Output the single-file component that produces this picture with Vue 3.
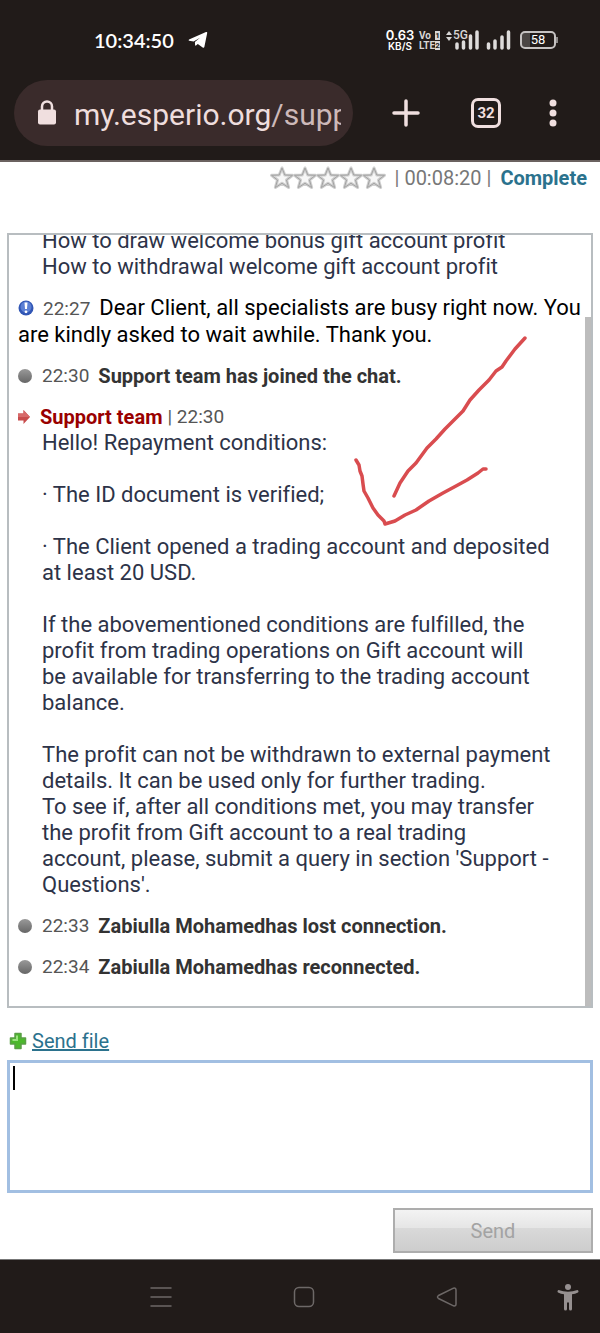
<script setup>
import { ref } from 'vue'

const entries = [
  { kind: 'reply', text: 'How to draw welcome bonus gift account profit\nHow to withdrawal welcome gift account profit' },
  { kind: 'notice', time: '22:27', text: 'Dear Client, all specialists are busy right now. You are kindly asked to wait awhile. Thank you.' },
  { kind: 'event', time: '22:30', text: 'Support team has joined the chat.' },
  {
    kind: 'reply',
    author: 'Support team',
    time: '22:30',
    text: `Hello! Repayment conditions:

· The ID document is verified;

· The Client opened a trading account and deposited
at least 20 USD.

If the abovementioned conditions are fulfilled, the
profit from trading operations on Gift account will
be available for transferring to the trading account
balance.

The profit can not be withdrawn to external payment
details. It can be used only for further trading.
To see if, after all conditions met, you may transfer
the profit from Gift account to a real trading
account, please, submit a query in section 'Support -
Questions'.`,
  },
  { kind: 'event', time: '22:33', text: 'Zabiulla Mohamedhas lost connection.' },
  { kind: 'event', time: '22:34', text: 'Zabiulla Mohamedhas reconnected.' },
]

const draft = ref('')
</script>

<template>
  <div class="screen">
    <div class="status">
      <span class="clock">10:34:50</span>
      <svg class="plane" width="20" height="18" viewBox="0 0 20 18"><path d="M1 8.600 18 1.100Q19.400.7 19.200 2L16.400 15.800Q16 17.400 14.700 16.600L9.800 13 8 14.600Q7.200 15 7.100 14L6.900 11 12 6.800 5.600 10.600 1.100 9.800Q.1 9.300 1 8.600Z" fill="#fff" /></svg>
      <div class="indicators">
        <div class="rate"><span class="rate-value">0.63</span><span>KB/S</span></div>
        <div class="volte">
          <span>Vo<i>1</i></span><span>LTE<i>2</i></span>
        </div>
        <div class="network">
          <svg width="34" height="20" viewBox="0 0 34 20">
            <path d="M3 1 6 5H0ZM0 7H6L3 11Z" fill="#d8d6d5" />
            <path d="M11 14V18M17.500 12V18M24.500 6V18M31 2V18" stroke="#dedcdb" stroke-width="3.500" stroke-linecap="round" />
          </svg>
          <span class="gen">5G</span>
        </div>
        <svg class="bars" width="26" height="20" viewBox="0 0 26 20"><path d="M2.500 14V18M9 11V18M16 7V18M22.500 2V18" stroke="#dedcdb" stroke-width="3.500" stroke-linecap="round" /></svg>
        <div class="battery"><span>58</span></div>
      </div>
    </div>

    <div class="toolbar">
      <div class="address">
        <svg width="20" height="26" viewBox="0 0 20 26"><path d="M5 11V6.500a5 5 0 0 1 10 0V11" fill="none" stroke="#f0dfdf" stroke-width="2.500" /><rect x="1" y="9.500" width="18" height="15" rx="2" fill="#f0dfdf" /></svg>
        <span class="url">my.esperio.org<span class="path">/support</span></span>
      </div>
      <button class="icon-button" aria-label="New tab"><svg width="28" height="28" viewBox="0 0 28 28"><path d="M14 2V26M2 14H26" stroke="#f0dfdf" stroke-width="3.500" stroke-linecap="round" /></svg></button>
      <button class="tabs" aria-label="Open tabs">32</button>
      <button class="icon-button" aria-label="Menu"><svg width="8" height="28" viewBox="0 0 8 28"><g fill="#f0dfdf"><circle cx="4" cy="4" r="3.500" /><circle cx="4" cy="14" r="3.500" /><circle cx="4" cy="24" r="3.500" /></g></svg></button>
    </div>

    <main class="page">
      <div class="session">
        <div class="stars">
          <svg v-for="n in 5" :key="n" width="24" height="24" viewBox="0 0 24 24"><path d="M12 2 14.800 9 22.500 9.300 16.500 14 18.600 21.500 12 17.300 5.400 21.500 7.500 14 1.500 9.300 9.200 9Z" fill="#f7f7f7" stroke="#cfcfcf" stroke-width="3" stroke-linejoin="round" /><path d="M12 2 14.800 9 22.500 9.300 16.500 14 18.600 21.500 12 17.300 5.400 21.500 7.500 14 1.500 9.300 9.200 9Z" fill="none" stroke="#a3a3a3" stroke-width="1" stroke-linejoin="round" /></svg>
        </div>
        <span>| 00:08:20 |</span>
        <a href="#" class="complete">Complete</a>
      </div>

      <section class="chat">
        <div v-for="(entry, i) in entries" :key="i" class="entry" :class="entry.kind">
          <template v-if="entry.kind === 'reply'">
            <div v-if="entry.author" class="author">
              <svg width="12" height="14" viewBox="0 0 12 14"><path d="M0 3.500H5.500V0L12 7 5.500 14V10.500H0Z" fill="#c84c4c" /><path d="M0 3.500H5.500V0L12 7H0Z" fill="#d76a6a" /></svg>
              <b>{{ entry.author }}</b><span class="time">| {{ entry.time }}</span>
            </div>
            <p class="message">{{ entry.text }}</p>
          </template>
          <template v-else-if="entry.kind === 'notice'">
            <svg class="mark" width="16" height="16" viewBox="0 0 16 16"><circle cx="8" cy="8" r="7.500" fill="#3156b5" /><circle cx="8" cy="7" r="5.500" fill="#5b7fd4" /><path d="M6.500 2.500H9.500L9 9H7Z" fill="#fff" /><circle cx="8" cy="11.800" r="1.400" fill="#fff" /></svg><span class="time">{{ entry.time }}</span>{{ entry.text }}
          </template>
          <template v-else>
            <span class="dot"></span><span class="time">{{ entry.time }}</span><b>{{ entry.text }}</b>
          </template>
        </div>
        <div class="scroll-thumb"></div>
        <svg class="scribble" width="180" height="196" viewBox="0 0 180 196" fill="none" stroke="#d94c4f" stroke-width="3.500" stroke-linecap="round" stroke-linejoin="round">
          <path d="M173 5 163 16 154 28 150 34 144 38 137 47 127 57 118 67 111 78 102 87 93 96 84 106 75 115 64 130 56 138 48 150 42 163" />
          <path d="M4 127 7 132 8 138 10 143 11 151 12 158 16 165 21 175 26 182 32 188 33 191 43 188 53 182 64 177 77 168 91 160 104 153 115 147 126 140 131 136 134 136" />
        </svg>
      </section>

      <a href="#" class="send-file">
        <svg width="18" height="18" viewBox="0 0 18 18"><path d="M6 1.500H12V6H16.500V12H12V16.500H6V12H1.500V6H6Z" fill="#4cb82c" stroke="#5a9f45" stroke-width="1.500" stroke-linejoin="round" /><path d="M8 3.500V8H3.500" fill="none" stroke="#9be37f" stroke-width="2" /></svg>
        <span>Send file</span>
      </a>
      <div class="field">
        <textarea v-model="draft" class="draft" aria-label="Message"></textarea>
        <span v-if="!draft" class="caret"></span>
      </div>
      <button class="send" disabled>Send</button>
    </main>

    <nav class="system">
      <button aria-label="Recent apps"><svg width="22" height="22" viewBox="0 0 22 22"><path d="M1 2H21M1 11H21M1 20H21" /></svg></button>
      <button aria-label="Home"><svg width="22" height="22" viewBox="0 0 22 22"><rect x="1.500" y="1.500" width="19" height="19" rx="4.500" /></svg></button>
      <button aria-label="Back"><svg width="22" height="22" viewBox="0 0 22 22"><path d="M17.500 2.200 2.500 9.500Q.500 11 2.500 12.500L17.500 19.800Q20 20.500 20 18V4Q20 1.500 17.500 2.200Z" /></svg></button>
      <button class="access" aria-label="Accessibility"><svg width="22" height="28" viewBox="0 0 22 28"><circle cx="11" cy="4" r="3" /><path d="M1.500 7Q11 10.500 20.500 7A1.500 1.500 0 0 1 21 9.500Q18 11 15 11.200V26A1 1 0 0 1 12 26V19.500H10V26A1 1 0 0 1 7 26V11.200Q4 11 1 9.500A1.500 1.500 0 0 1 1.500 7Z" /></svg></button>
    </nav>
  </div>
</template>

<style>
body { margin: 0; background: #fff; }
</style>

<style scoped>
* { box-sizing: border-box; }
button { padding: 0; border: 0; background: none; font-family: inherit; }
svg { display: block; flex: none; }
.screen { min-height: 100vh; display: flex; flex-direction: column; font-family: Roboto, "Liberation Sans", sans-serif; font-variant-ligatures: none; background: #fff; }

.status { height: 80px; padding: 0 44px 0 94px; display: flex; align-items: center; background: #211b19; color: #fff; }
.clock { font: 600 20px/24px Lato, Roboto, sans-serif; }
.plane { margin-left: 14px; }
.indicators { margin-left: auto; display: flex; align-items: center; }
.rate { width: 28px; display: flex; flex-direction: column; align-items: center; font: 600 10px/10px Inter, Roboto, sans-serif; }
.rate-value { font-size: 13px; line-height: 12px; }
.volte { width: 21px; margin-left: 5px; display: flex; flex-direction: column; gap: 1px; font: 700 10px/9px "DejaVu Sans Condensed", Roboto, sans-serif; font-family: Roboto, sans-serif; color: #d8d6d5; }
.volte span { display: flex; justify-content: space-between; }
.volte i { flex: none; width: 5px; background: #d8d6d5; color: #211b19; font-size: 8px; font-style: normal; text-align: center; }
.network { position: relative; margin-left: 6px; }
.gen { position: absolute; left: 7px; top: 0; background: #211b19; font: 500 12px/10px Roboto, sans-serif; color: #d8d6d5; }
.bars { margin-left: 6px; }
.battery { position: relative; width: 36px; height: 18px; margin-left: 8px; border: 2px solid #c5c2c1; border-radius: 5px; background: linear-gradient(90deg, #4b4644 26%, #211b19 26%); text-align: center; font-size: 13px; line-height: 14px; }
.battery::after { content: ""; position: absolute; right: -4px; top: 4px; width: 2px; height: 6px; background: #8d8988; }

.toolbar { height: 82px; padding: 0 43px 14px 14px; display: flex; align-items: center; background: #211b19; border-bottom: 2px solid #6b6260; }
.address { flex: 1; height: 66px; padding: 0 12px 0 23px; display: flex; align-items: center; gap: 17px; overflow: hidden; border-radius: 33px; background: #3a2b2b; }
.url { flex: 1; padding-top: 4px; overflow: hidden; white-space: nowrap; font-size: 30px; line-height: 40px; color: #eedddd; }
.path { color: #cdb9b9; }
.icon-button { display: flex; }
.address + .icon-button { margin-left: 39px; }
.tabs { width: 30px; height: 30px; margin: 0 48px 0 51px; border: 3px solid #f0dfdf; border-radius: 7px; color: #f0dfdf; font-size: 15px; font-weight: 700; line-height: 24px; }
.tabs + .icon-button { margin: 0; }

.page { flex: 1; padding: 3px 7px 6px; display: flex; flex-direction: column; }
.session { height: 68px; padding-right: 6px; display: flex; justify-content: flex-end; align-items: flex-start; font-size: 20px; line-height: 26px; color: #777; white-space: nowrap; }
.stars { display: flex; height: 26px; margin-right: 10px; align-items: center; }
.stars svg { margin-right: -1px; }
.complete { margin-left: 9px; color: #2b728d; font-weight: 700; text-decoration: none; }

.chat { position: relative; flex: 1 0 775px; height: 775px; padding: 0 0 26px 9px; border: 2px solid #b8bdc0; display: flex; flex-direction: column; justify-content: flex-end; gap: 15px; overflow: hidden; }
.entry { font-size: 22px; line-height: 26px; }
.event { display: flex; align-items: center; font-size: 20px; color: #333; }
.time { font-size: 19px; color: #555; }
.event .time { margin: 0 9px 0 10px; }
.dot { width: 14px; height: 14px; border-radius: 50%; background: linear-gradient(#999, #666); }
.notice { color: #000; }
.notice .time { margin: 0 9px; }
.mark { display: inline-block; vertical-align: -1px; }
.author { display: flex; align-items: center; height: 26px; font-size: 20px; }
.author b { margin: 0 5px 0 10px; color: #900; }
.message { margin: 0 0 0 24px; white-space: pre-line; color: #2d3348; }
.scroll-thumb { position: absolute; right: -2px; top: 82px; bottom: 0; width: 8px; background: #bdbdbd; }
.scribble { position: absolute; left: 343px; top: 98px; }

.send-file { align-self: flex-start; margin: 20px 0 6px 2px; display: flex; align-items: center; gap: 5px; color: #2b728d; font-size: 20px; line-height: 26px; }
.send-file span { text-decoration: underline; }
.field { position: relative; }
.draft { display: block; width: 100%; height: 133px; padding: 3px; border: 3px solid #a2bfe2; border-radius: 0; outline: none; resize: none; font: 22px/26px Roboto, sans-serif; color: #000; caret-color: transparent; background: #fff; }
.caret { position: absolute; left: 6px; top: 6px; width: 2px; height: 24px; background: #000; pointer-events: none; }
.send { align-self: flex-end; width: 200px; height: 45px; margin-top: 15px; border: 2px solid #adadad; background: linear-gradient(#f3f3f3, #e5e5e5 45%, #d9d9d9 45%, #cdcdcd); color: #a3a3a3; font-size: 20px; }

.system { height: 74px; padding: 0 21px 0 150px; display: flex; align-items: center; justify-content: space-between; background: #211b19; border-top: 1px solid #777; }
.system svg { fill: none; stroke: #6d6867; stroke-width: 1.500; stroke-linecap: round; }
.system .access { margin-left: -22px; }
.system .access svg { fill: #969090; stroke: none; }
</style>
